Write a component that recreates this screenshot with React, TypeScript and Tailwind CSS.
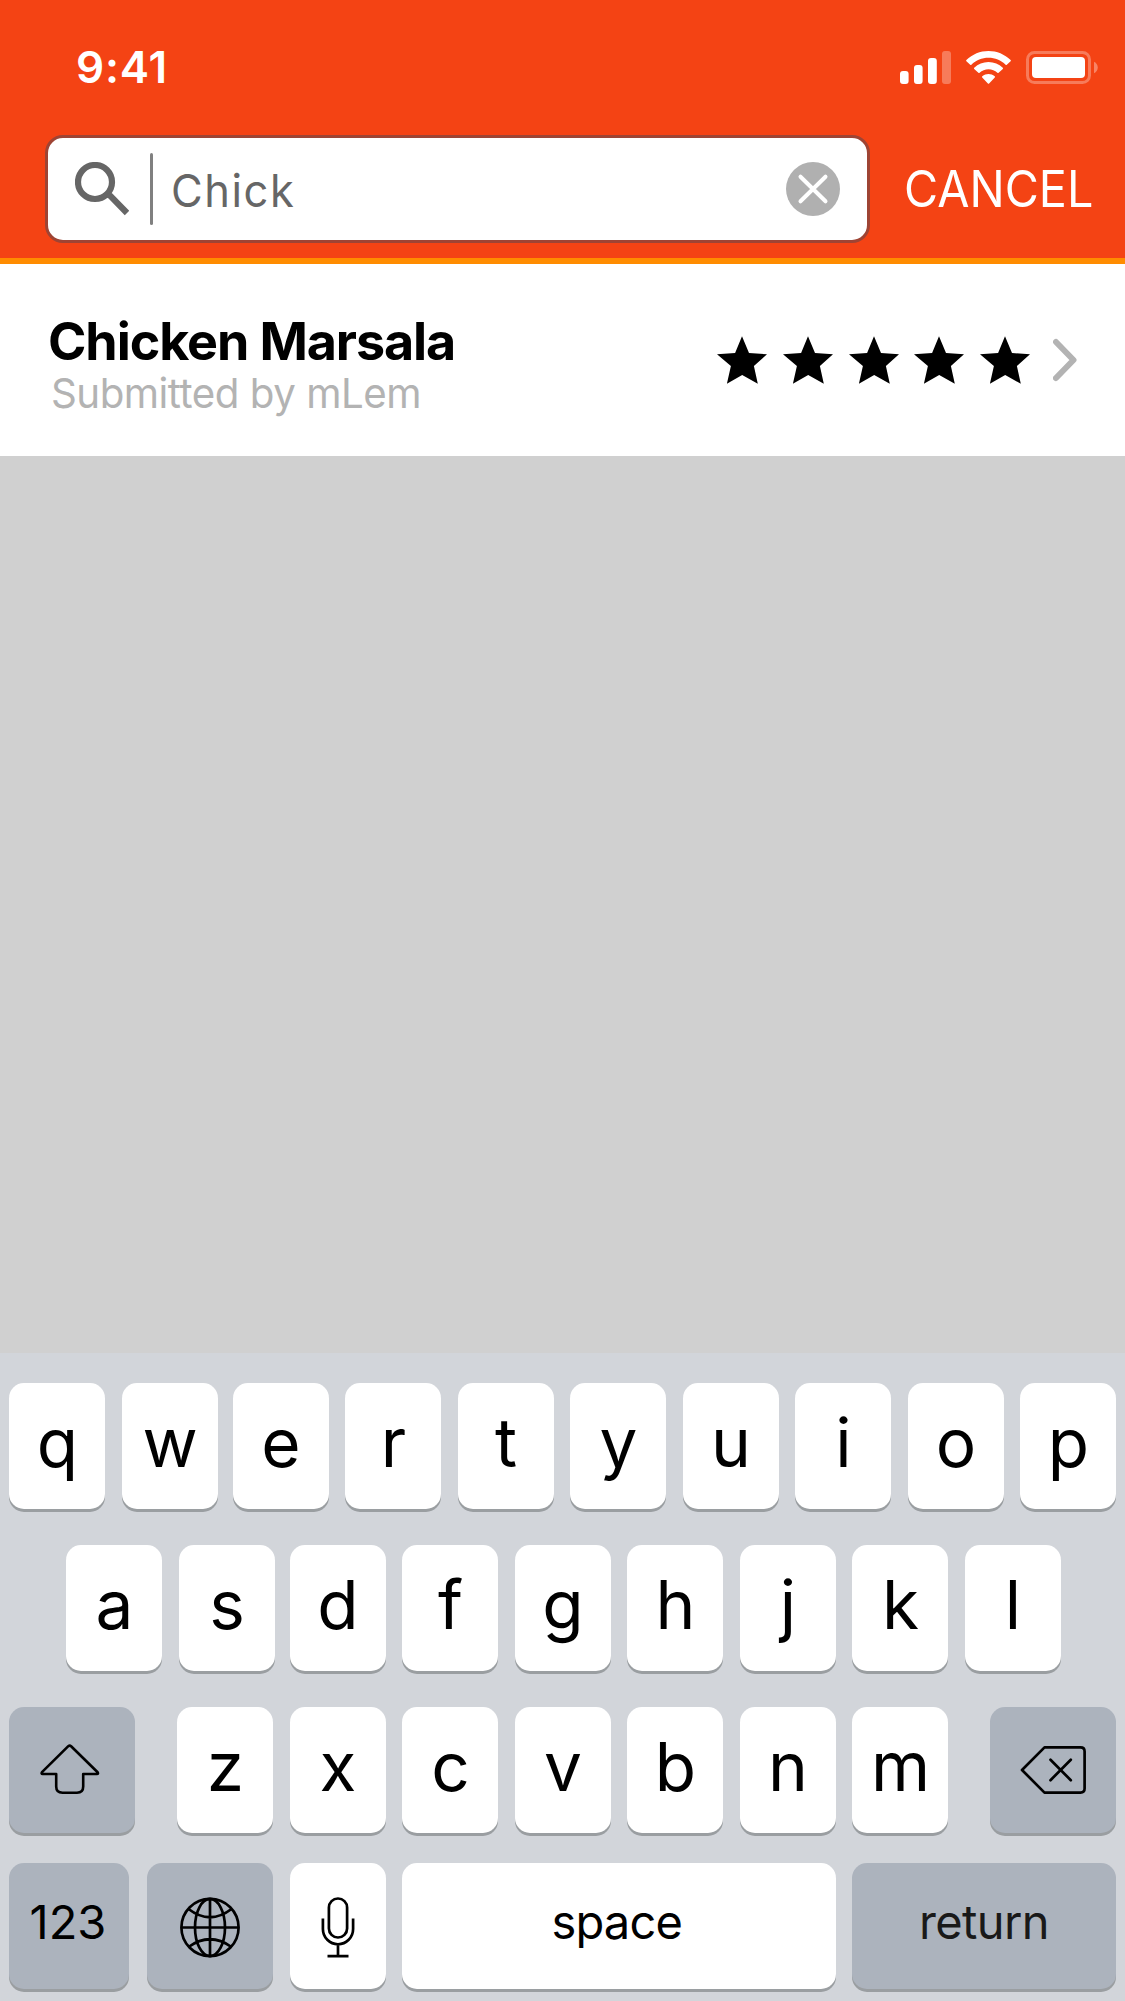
import type { ReactNode } from "react";

function Key({ children, className = "" }: { children: ReactNode; className?: string }) {
  return (
    <button
      className={`flex h-[126px] shrink-0 items-start justify-center rounded-[15px] shadow-[0_3px_0_#9a9ea1] ${className}`}
    >
      {children}
    </button>
  );
}

function Letter({ children, className = "" }: { children: string; className?: string }) {
  return (
    <Key className={`w-24 bg-white pl-[1px] text-[67.5px] leading-[120px] ${className}`}>
      <span>{children}</span>
    </Key>
  );
}

function StatusBar() {
  return (
    <div className="flex h-[135px] items-start justify-between pr-[27px] pl-[76px] text-white">
      <span className="mt-[41px] text-[44px] leading-[53px] font-semibold tracking-[0.8px]">9:41</span>
      <div className="mt-[51px] flex">
        <svg className="h-[33px] w-[51px]" viewBox="0 0 51 33" fill="currentColor">
          <rect y="20" width="8.6" height="13" rx="3" />
          <rect x="14" y="14" width="8.6" height="19" rx="3" />
          <rect x="28" y="7" width="8.8" height="26" rx="3" />
          <rect x="42" width="9" height="33" rx="3" opacity=".3" />
        </svg>
        <svg className="ml-[15px] h-[33px] w-[45px]" viewBox="0 0 45 33" fill="currentColor">
          <path d="M22.5 6.8C29 6.8 35 9.4 39.6 13.7Q40.2 14.3 40.8 13.7L44.6 10.2Q45.2 9.6 44.6 9C38.6 3.3 30.9 0 22.5 0S6.4 3.3.4 9Q-.2 9.6.4 10.2L4.2 13.7Q4.8 14.3 5.4 13.7C10 9.4 16 6.8 22.5 6.8Z" />
          <path d="M22.5 18.2C25.9 18.2 29 19.4 31.4 21.7Q32 22.3 32.6 21.7L36.8 18Q37.4 17.4 36.8 16.8C32.9 13.2 28 11 22.5 11S12.1 13.2 8.2 16.8Q7.6 17.4 8.2 18L12.4 21.7Q13 22.3 13.6 21.7C16 19.4 19.1 18.2 22.5 18.2Z" />
          <path d="M28.8 26.4Q29.4 25.8 28.7 25.2C25.1 22.2 19.9 22.2 16.3 25.2Q15.6 25.8 16.2 26.4L21.9 32.4Q22.5 33 23.1 32.4Z" />
        </svg>
        <svg className="ml-[15px] h-[33px] w-[72px]" viewBox="0 0 72 33" fill="currentColor">
          <rect x="1.5" y="1.5" width="62" height="30" rx="7" fill="none" stroke="currentColor" strokeWidth="3" opacity=".3" />
          <rect x="6" y="6" width="53" height="21" rx="4" />
          <path d="M68 10.8C73 13 73 20 68 22.2Z" opacity=".35" />
        </svg>
      </div>
    </div>
  );
}

function SearchBar() {
  return (
    <div className="flex h-[123px] items-start pl-[45px]">
      <div className="flex h-[108px] w-[825px] items-center rounded-[18px] border-[3px] border-[#9e4434] bg-white pr-[27px] pl-[27px] text-[#666]">
        <svg className="h-[54px] w-[54px]" viewBox="0 0 54 54" fill="none" stroke="currentColor">
          <circle cx="20" cy="20" r="17" strokeWidth="6.2" />
          <path d="M32.5 32.5L35.5 34L52 51" strokeWidth="6.2" />
        </svg>
        <span className="ml-[21px] h-[72px] w-[3px] rounded-full bg-[#808080]" />
        <span className="mt-[3px] ml-[18px] grow origin-left scale-x-[.965] text-[45px] leading-[54px] tracking-[1.6px]">
          Chick
        </span>
        <svg className="h-[54px] w-[54px]" viewBox="0 0 54 54">
          <circle cx="27" cy="27" r="27" fill="#b0b0b0" />
          <path d="M14.5 14.7L39.5 39.3M39.5 14.7L14.5 39.3" stroke="#fff" strokeWidth="4" strokeLinecap="round" />
        </svg>
      </div>
      <span className="mt-[24px] ml-[33.5px] origin-left scale-x-[.935] text-[50px] leading-[60px] text-white">
        CANCEL
      </span>
    </div>
  );
}

function Result() {
  return (
    <section className="flex h-48 items-start justify-between bg-white pr-[48px] pl-[48px]">
      <div className="flex flex-col items-start pt-[48px]">
        <h1 className="text-[52px] leading-[60px] font-bold tracking-[-1.1px]">Chicken Marsala</h1>
        <p className="ml-[3px] origin-left scale-x-[.982] text-[41px] leading-[42px] tracking-[-0.5px] text-[#b3b3b3]">
          Submitted by mLem
        </p>
      </div>
      <div className="mt-[72px] flex">
        <div className="flex gap-[15.7px]">
          {[1, 2, 3, 4, 5].map((n) => (
            <svg key={n} className="h-[48px] w-[50px]" viewBox="0 0 50 48">
              <path d="M25 .2L32 17L50 18.3L36.9 30L40.8 47.8L25.2 39L9.9 47.8L13.9 30L0 18.3L18.1 17Z" />
            </svg>
          ))}
        </div>
        <svg className="ml-[23px] h-[48px] w-[24px]" viewBox="0 0 24 48" fill="none">
          <path d="M3 6L20.5 24L3 42" stroke="#b3b3b3" strokeWidth="6" strokeLinecap="round" strokeLinejoin="round" />
        </svg>
      </div>
    </section>
  );
}

const row = "flex px-[9px]";

function Keyboard() {
  return (
    <section className="h-[648px] bg-[#d2d5da] pt-[30px]">
      <div className={row}>
        <Letter>q</Letter>
        <Letter className="ml-[16.5px]">w</Letter>
        <Letter className="ml-[15px]">e</Letter>
        {"rtyuiop".split("").map((c) => (
          <Letter key={c} className="ml-[16.5px]">{c}</Letter>
        ))}
      </div>
      <div className="mt-[36px] flex pl-[66px]">
        <Letter>a</Letter>
        <Letter className="ml-[16.5px]">s</Letter>
        <Letter className="ml-[15px]">d</Letter>
        {"fghjkl".split("").map((c) => (
          <Letter key={c} className="ml-[16.5px]">{c}</Letter>
        ))}
      </div>
      <div className={`mt-[36px] ${row}`}>
        <Key className="w-[126px] bg-[#acb3bd]">
          <svg className="h-[126px] w-[126px]" viewBox="9 27 126 126" fill="none" stroke="#000" strokeWidth="2.6" strokeLinejoin="round">
            <path d="M68.3 66.2Q69.7 65 71.1 66.2L97.6 92.2Q98.6 94 97 94H83.2V106.5Q83.2 112.7 77 112.7H62.5Q56.2 112.7 56.2 106.5V94H42.6Q41 94 42 92.2Z" />
          </svg>
        </Key>
        <Letter className="ml-[42px]">z</Letter>
        {"xcvbnm".split("").map((c) => (
          <Letter key={c} className="ml-[16.5px]">{c}</Letter>
        ))}
        <Key className="ml-[42px] w-[126px] bg-[#acb3bd]">
          <svg className="h-[126px] w-[126px]" viewBox="245 27 126 126" fill="none" stroke="#000" strokeWidth="2.7" strokeLinejoin="round">
            <path d="M277 90L299.5 67.4H335.5Q339.6 67.4 339.6 71.5V108.5Q339.6 112.6 335.5 112.6H299.5Z" />
            <path d="M305.5 79.8L325.8 100.2M325.8 79.8L305.5 100.2" strokeLinecap="round" />
          </svg>
        </Key>
      </div>
      <div className={`mt-[30px] ${row} text-[47px] leading-[117px]`}>
        <Key className="w-[120px] bg-[#acb3bd] pr-[2px]">123</Key>
        <Key className="ml-[18px] w-[126px] bg-[#acb3bd]">
          <svg className="h-[126px] w-[126px]" viewBox="147 183 126 126" fill="none" stroke="#000" strokeWidth="2.7">
            <circle cx="210" cy="247.5" r="28.6" />
            <ellipse cx="210" cy="247.5" rx="15" ry="28.6" />
            <path d="M210 219V276M181.5 247.5H238.5M188.5 229Q210 245.5 231.5 229M188.5 267Q210 251.5 231.5 267" />
          </svg>
        </Key>
        <Key className="ml-[16.5px] w-24 bg-white">
          <svg className="h-[126px] w-24" viewBox="289.5 183 96 126" fill="none" stroke="#000" strokeWidth="2.7">
            <rect x="328.4" y="218.5" width="18.2" height="39" rx="9.1" />
            <path d="M322.4 238.5V249A15.1 15.3 0 0 0 352.6 249V238.5M337.5 264.3V276M327 276.2H348" />
          </svg>
        </Key>
        <Key className="ml-[16.5px] w-[433.5px] bg-white pr-[4px] tracking-[-0.8px]">space</Key>
        <Key className="ml-[16.5px] w-[264px] bg-[#acb3bd] tracking-[-0.6px] text-[#191919]">return</Key>
      </div>
    </section>
  );
}

export default function App() {
  return (
    <main className="flex h-[2001px] w-[1125px] flex-col overflow-hidden bg-[#d0d0d0] font-['Inter',sans-serif] text-black">
      <header className="h-[264px] border-b-[6px] border-[#ff8c00] bg-[#f44314]">
        <StatusBar />
        <SearchBar />
      </header>
      <Result />
      <div className="grow" />
      <Keyboard />
    </main>
  );
}
